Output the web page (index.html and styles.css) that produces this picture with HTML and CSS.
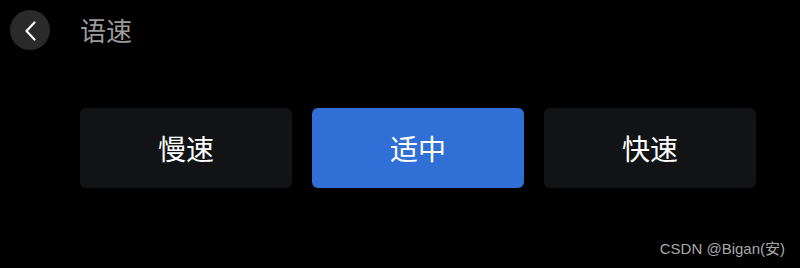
FILE: index.html
```html
<!DOCTYPE html>
<html lang="zh">
<head>
<meta charset="utf-8">
<link rel="stylesheet" href="styles.css">
</head>
<body>
<div class="page">
  <header class="header">
    <div class="back">
      <svg width="40" height="40" viewBox="0 0 40 40"><path d="M24.5 12.5 L16.5 21 L24.5 29.5" fill="none" stroke="#fff" stroke-width="2.2" stroke-linecap="round" stroke-linejoin="round"/></svg>
    </div>
    <div class="title">语速</div>
  </header>
  <div class="options">
    <div class="opt">慢速</div>
    <div class="opt active">适中</div>
    <div class="opt">快速</div>
  </div>
  <div class="mark">CSDN @Bigan(安)</div>
</div>
</body>
</html>
```
FILE: styles.css
```css
html, body {
  margin: 0;
  padding: 0;
  background: #000;
}
.page {
  width: 800px;
  height: 268px;
  position: relative;
  font-family: "Noto Sans CJK SC", "Noto Sans", sans-serif;
}
.header {
  display: flex;
  align-items: center;
  padding: 10px;
  height: 40px;
}
.back {
  width: 40px;
  height: 40px;
  border-radius: 50%;
  background: #2a2a2a;
  display: flex;
}
.title {
  margin-left: 30px;
  font-size: 26px;
  line-height: 40px;
  color: #9a9a9a;
}
.options {
  display: flex;
  gap: 20px;
  padding-left: 80px;
  margin-top: 48px;
}
.opt {
  width: 212px;
  height: 80px;
  border-radius: 6px;
  background: #121315;
  color: #fff;
  font-size: 28px;
  display: flex;
  align-items: center;
  justify-content: center;
}
.opt.active {
  background: #2f6fd6;
}
.mark {
  position: absolute;
  right: 15px;
  bottom: 10px;
  font-family: "Liberation Sans", "Noto Sans CJK SC", sans-serif;
  font-size: 15px;
  color: #a8a8a8;
}
```
